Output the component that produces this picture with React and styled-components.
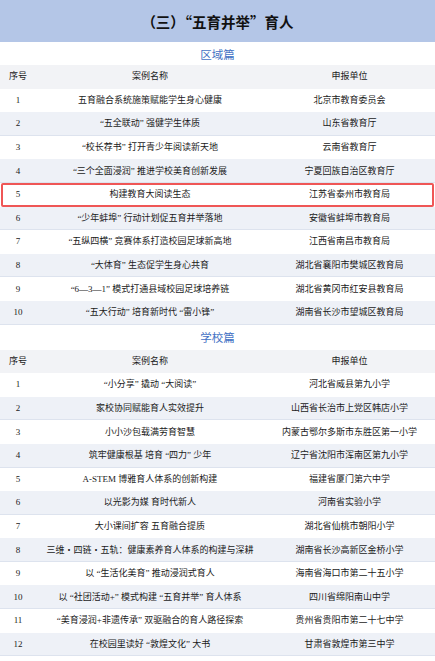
import styled, { createGlobalStyle } from "styled-components";

const GlobalStyle = createGlobalStyle`
  html, body {
    margin: 0;
    padding: 0;
    background: #ffffff;
  }
  body {
    font-family: "Liberation Serif", "Noto Sans CJK SC", serif;
    color: #1a1a1a;
  }
`;

const Page = styled.div`
  width: 435px;
  display: flex;
  flex-direction: column;
`;

const TitleBar = styled.header`
  height: 42px;
  background: #b4c6e7;
  display: flex;
  align-items: center;
  justify-content: center;
  font-family: "Noto Sans CJK SC", sans-serif;
  font-feature-settings: "fwid";
  font-size: 14.5px;
  font-weight: 700;
  color: #111111;
`;

const SectionTitle = styled.h3`
  margin: 0;
  height: ${(p) => p.$h}px;
  display: flex;
  align-items: center;
  justify-content: center;
  font-family: "Noto Sans CJK SC", sans-serif;
  font-weight: 400;
  font-size: 11.5px;
  color: #4472c4;
`;

const Row = styled.div`
  position: relative;
  display: grid;
  grid-template-columns: 36px 228px 1fr;
  height: 23.6px;
  align-items: center;
  background: ${(p) => (p.$shade ? "#eef1f7" : "#ffffff")};
  box-shadow: ${(p) => (p.$shade ? "inset 0 -1px 0 #dde3ee" : "none")};
  font-size: 9px;
  line-height: 1;

  ${(p) =>
    p.$mark &&
    `
    &::after {
      content: "";
      position: absolute;
      inset: 0 1px;
      border: 2px solid #ef5656;
      border-radius: 2px;
    }
  `}
`;

const HeadRow = styled(Row)`
  background: #f2f3f6;
  box-shadow: none;
`;

const Cell = styled.div`
  text-align: center;
  white-space: nowrap;
  font-family: "Liberation Serif", "Noto Sans CJK SC", serif;
`;

const regional = [
  ["五育融合系统施策赋能学生身心健康", "北京市教育委员会"],
  ["“五全联动” 强健学生体质", "山东省教育厅"],
  ["“校长荐书” 打开青少年阅读新天地", "云南省教育厅"],
  ["“三个全面浸润” 推进学校美育创新发展", "宁夏回族自治区教育厅"],
  ["构建教育大阅读生态", "江苏省泰州市教育局"],
  ["“少年蚌埠” 行动计划促五育并举落地", "安徽省蚌埠市教育局"],
  ["“五纵四横” 竞赛体系打造校园足球新高地", "江西省南昌市教育局"],
  ["“大体育” 生态促学生身心共育", "湖北省襄阳市樊城区教育局"],
  ["“6—3—1” 模式打通县域校园足球培养链", "湖北省黄冈市红安县教育局"],
  ["“五大行动” 培育新时代 “雷小锋”", "湖南省长沙市望城区教育局"],
];

const schools = [
  ["“小分享” 撬动 “大阅读”", "河北省威县第九小学"],
  ["家校协同赋能育人实效提升", "山西省长治市上党区韩店小学"],
  ["小小沙包载满劳育智慧", "内蒙古鄂尔多斯市东胜区第一小学"],
  ["筑牢健康根基 培育 “四力” 少年", "辽宁省沈阳市浑南区第九小学"],
  ["A-STEM 博雅育人体系的创新构建", "福建省厦门第六中学"],
  ["以光影为媒 育时代新人", "河南省实验小学"],
  ["大小课间扩容 五育融合提质", "湖北省仙桃市朝阳小学"],
  ["三维・四链・五轨：健康素养育人体系的构建与深耕", "湖南省长沙高新区金桥小学"],
  ["以 “生活化美育” 推动浸润式育人", "海南省海口市第二十五小学"],
  ["以 “社团活动+” 模式构建 “五育并举” 育人体系", "四川省绵阳南山中学"],
  ["“美育浸润+非遗传承” 双驱融合的育人路径探索", "贵州省贵阳市第二十七中学"],
  ["在校园里读好 “敦煌文化” 大书", "甘肃省敦煌市第三中学"],
];

function CaseTable({ rows, mark }) {
  return (
    <div>
      <HeadRow>
        <Cell>序号</Cell>
        <Cell>案例名称</Cell>
        <Cell>申报单位</Cell>
      </HeadRow>
      {rows.map(([name, unit], i) => (
        <Row key={i} $shade={i % 2 === 1} $mark={mark === i + 1}>
          <Cell>{i + 1}</Cell>
          <Cell>{name}</Cell>
          <Cell>{unit}</Cell>
        </Row>
      ))}
    </div>
  );
}

export default function App() {
  return (
    <Page>
      <GlobalStyle />
      <TitleBar>（三）“五育并举”育人</TitleBar>
      <SectionTitle $h={23}>区域篇</SectionTitle>
      <CaseTable rows={regional} mark={5} />
      <SectionTitle $h={25}>学校篇</SectionTitle>
      <CaseTable rows={schools} />
    </Page>
  );
}
